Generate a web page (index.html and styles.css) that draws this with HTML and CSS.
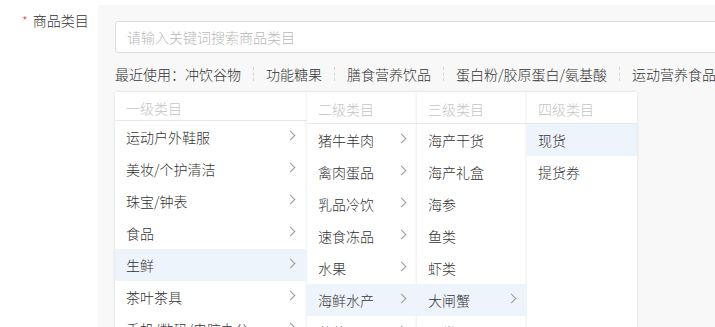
FILE: index.html
```html
<!DOCTYPE html>
<html lang="zh-CN">
<head>
<meta charset="utf-8">
<link rel="stylesheet" href="styles.css">
</head>
<body>
<div class="page">
  <div class="label"><span class="req">*</span>商品类目</div>
  <div class="panel">
    <div class="search">请输入关键词搜索商品类目</div>
    <div class="recent">
      <span class="recent-title">最近使用：</span><span class="tag first">冲饮谷物</span><span class="tag">功能糖果</span><span class="tag">膳食营养饮品</span><span class="tag">蛋白粉/胶原蛋白/氨基酸</span><span class="tag">运动营养食品</span>
    </div>
    <div class="cols">
      <div class="col col-1">
        <div class="head">一级类目</div>
        <div class="item">运动户外鞋服<span class="chev"></span></div>
        <div class="item">美妆/个护清洁<span class="chev"></span></div>
        <div class="item">珠宝/钟表<span class="chev"></span></div>
        <div class="item">食品<span class="chev"></span></div>
        <div class="item active">生鲜<span class="chev"></span></div>
        <div class="item">茶叶茶具<span class="chev"></span></div>
        <div class="item">手机/数码/电脑办公<span class="chev"></span></div>
      </div>
      <div class="col">
        <div class="head">二级类目</div>
        <div class="item">猪牛羊肉<span class="chev"></span></div>
        <div class="item">禽肉蛋品<span class="chev"></span></div>
        <div class="item">乳品冷饮<span class="chev"></span></div>
        <div class="item">速食冻品<span class="chev"></span></div>
        <div class="item">水果<span class="chev"></span></div>
        <div class="item active">海鲜水产<span class="chev"></span></div>
        <div class="item">蔬菜<span class="chev"></span></div>
      </div>
      <div class="col">
        <div class="head">三级类目</div>
        <div class="item">海产干货</div>
        <div class="item">海产礼盒</div>
        <div class="item">海参</div>
        <div class="item">鱼类</div>
        <div class="item">虾类</div>
        <div class="item active">大闸蟹<span class="chev"></span></div>
        <div class="item">贝类</div>
      </div>
      <div class="col">
        <div class="head">四级类目</div>
        <div class="item active">现货</div>
        <div class="item">提货券</div>
      </div>
    </div>
  </div>
</div>
</body>
</html>
```
FILE: styles.css
```css
html, body {
  margin: 0;
  padding: 0;
  background: #ffffff;
  font-family: "Noto Sans CJK SC", "Noto Sans", sans-serif;
  font-size: 14px;
  font-weight: 300;
  color: #333333;
  overflow: hidden;
}

.page {
  display: flex;
  align-items: flex-start;
  height: 327px;
  overflow: hidden;
}

.label {
  width: 76px;
  flex: none;
  padding-left: 22px;
  padding-top: 10px;
  line-height: 20px;
  color: #333;
  white-space: nowrap;
}

.req {
  color: #e5484d;
  margin-right: 5px;
  font-size: 13px;
}

.panel {
  flex: 1;
  margin-top: 5px;
  background: #f8f8f8;
  padding: 16px 0 0 17px;
  height: 330px;
  overflow: hidden;
}

.search {
  box-sizing: border-box;
  width: 720px;
  height: 32px;
  border: 1px solid #dcdcdc;
  border-radius: 3px;
  background: #fff;
  color: #b8b8b8;
  line-height: 30px;
  padding-left: 11px;
}

.recent {
  margin-top: 9px;
  line-height: 20px;
  white-space: nowrap;
  color: #333;
}

.tag {
  display: inline-block;
  padding: 0 12px;
  border-left: 1px dashed #d6d6d6;
  line-height: 14px;
  vertical-align: middle;
}

.recent-title {
  vertical-align: middle;
}

.tag.first {
  border-left: none;
  padding-left: 0;
}

.cols {
  display: flex;
  margin-top: 8px;
  align-items: flex-start;
}

.col {
  width: 110px;
  flex: none;
  background: #fff;
  box-shadow: 0 0 3px rgba(0, 0, 0, 0.12);
  min-height: 260px;
}

.col-1 {
  width: 192px;
}

.head {
  line-height: 20px;
  padding: 7px 11px 0;
  box-sizing: border-box;
  height: 32px;
  border-bottom: 1px solid #e8e8e8;
  color: #c4c4c4;
}

.col-1 .head {
  height: 29px;
  padding-top: 6px;
}

.item {
  position: relative;
  height: 32px;
  line-height: 32px;
  padding-left: 11px;
  white-space: nowrap;
  color: #333;
}

.item.active {
  background: #eef4fc;
}

.chev {
  position: absolute;
  top: 11px;
  right: 12px;
  width: 6px;
  height: 6px;
  border-top: 1px solid #9a9a9a;
  border-right: 1px solid #9a9a9a;
  transform: rotate(45deg);
  transform-origin: center;
}

.col-1 .chev {
  right: 13px;
}
```
